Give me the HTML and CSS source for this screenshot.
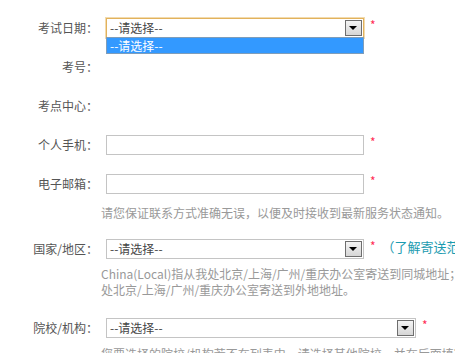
FILE: index.html
```html
<!DOCTYPE html>
<html lang="zh-CN">
<head>
    <meta charset="UTF-8">
    <title>报名信息</title>
    <link rel="stylesheet" href="styles.css">
</head>
<body>
    <div class="form">
        <div class="row row-date">
            <div class="label">考试日期：</div>
            <div class="field">
                <div class="select focused">
                    <span class="value">--请选择--</span>
                    <span class="arrow"></span>
                </div>
                <div class="options">
                    <div class="option active">--请选择--</div>
                </div>
            </div>
            <span class="req">*</span>
        </div>

        <div class="row">
            <div class="label">考号：</div>
            <div class="field empty"></div>
        </div>

        <div class="row">
            <div class="label">考点中心：</div>
            <div class="field empty"></div>
        </div>

        <div class="row">
            <div class="label">个人手机：</div>
            <div class="field"><input class="text" type="text"></div>
            <span class="req">*</span>
        </div>

        <div class="row">
            <div class="label">电子邮箱：</div>
            <div class="field"><input class="text" type="text"></div>
            <span class="req">*</span>
        </div>

        <p class="hint hint-contact">请您保证联系方式准确无误，以便及时接收到最新服务状态通知。</p>

        <div class="row row-country">
            <div class="label">国家/地区：</div>
            <div class="field">
                <div class="select">
                    <span class="value">--请选择--</span>
                    <span class="arrow"></span>
                </div>
            </div>
            <span class="req">*</span>
            <a class="more" href="#">（了解寄送范围）</a>
        </div>

        <p class="hint hint-country">China(Local)指从我处北京/上海/广州/重庆办公室寄送到同城地址；<br>处北京/上海/广州/重庆办公室寄送到外地地址。</p>

        <div class="row row-school">
            <div class="label">院校/机构：</div>
            <div class="field">
                <div class="select wide">
                    <span class="value">--请选择--</span>
                    <span class="arrow"></span>
                </div>
            </div>
            <span class="req">*</span>
        </div>

        <p class="hint hint-school">您要选择的院校/机构若不在列表中，请选择其他院校，并在后面填写。</p>
    </div>
</body>
</html>
```

FILE: styles.css
```css
html, body {
    margin: 0;
    padding: 0;
    background: #fff;
    overflow: hidden;
}
body {
    font-family: "Noto Sans CJK SC", "Liberation Sans", sans-serif;
    font-size: 12px;
    color: #555;
    width: 455px;
    height: 353px;
}
.form {
    padding-top: 18px;
    white-space: nowrap;
}
.row {
    display: flex;
    align-items: center;
    height: 20px;
    margin-bottom: 19px;
}
.row > * {
    flex-shrink: 0;
}
.label {
    width: 98px;
    margin-right: 8px;
    text-align: right;
    line-height: 20px;
}
.field {
    position: relative;
}
.field.empty {
    height: 20px;
}
.text {
    display: block;
    box-sizing: border-box;
    width: 258px;
    height: 20px;
    margin: 0;
    border: 1px solid #c4c4c4;
    background: #fff;
    padding: 0 4px;
}
.select {
    display: flex;
    align-items: center;
    box-sizing: border-box;
    width: 258px;
    height: 20px;
    border: 1px solid #c4c4c4;
    background: #fff;
    color: #444;
}
.select.wide {
    width: 310px;
}
.select.focused {
    border-color: #e2b25c;
    box-shadow: 0 0 0 1px rgba(232, 190, 110, 0.55);
}
.select .value {
    flex: 1;
    padding-left: 3px;
    line-height: 18px;
}
.select .arrow {
    position: relative;
    box-sizing: border-box;
    width: 17px;
    height: 16px;
    margin-right: 1px;
    border: 1px solid #6e6e6e;
    background: linear-gradient(#f4f4f4, #d6d6d6);
}
.select .arrow::after {
    content: "";
    position: absolute;
    left: 3px;
    top: 5px;
    border-left: 4px solid transparent;
    border-right: 4px solid transparent;
    border-top: 4px solid #000;
}
.options {
    position: absolute;
    left: 0;
    top: 19px;
    box-sizing: border-box;
    width: 258px;
    border: 1px solid #7f9db9;
    background: #fff;
    z-index: 2;
}
.option {
    height: 15px;
    line-height: 15px;
    padding-left: 3px;
    color: #333;
}
.option.active {
    background: #3399ff;
    color: #fff;
}
.req {
    align-self: flex-start;
    margin-left: 6px;
    color: #ff2d55;
    font-size: 12px;
    line-height: 14px;
}
.more {
    align-self: flex-start;
    margin-left: 6px;
    color: #1b9bb0;
    text-decoration: none;
    font-size: 13px;
    line-height: 16px;
}
.hint {
    margin: 0;
    padding-left: 101px;
    color: #999;
    line-height: 15px;
}
.hint-contact {
    margin-top: -8px;
    margin-bottom: 19px;
}
.row-country {
    margin-bottom: 7px;
}
.hint-country {
    line-height: 16px;
    margin-bottom: 20px;
}
.row-school {
    margin-bottom: 8px;
}
```
